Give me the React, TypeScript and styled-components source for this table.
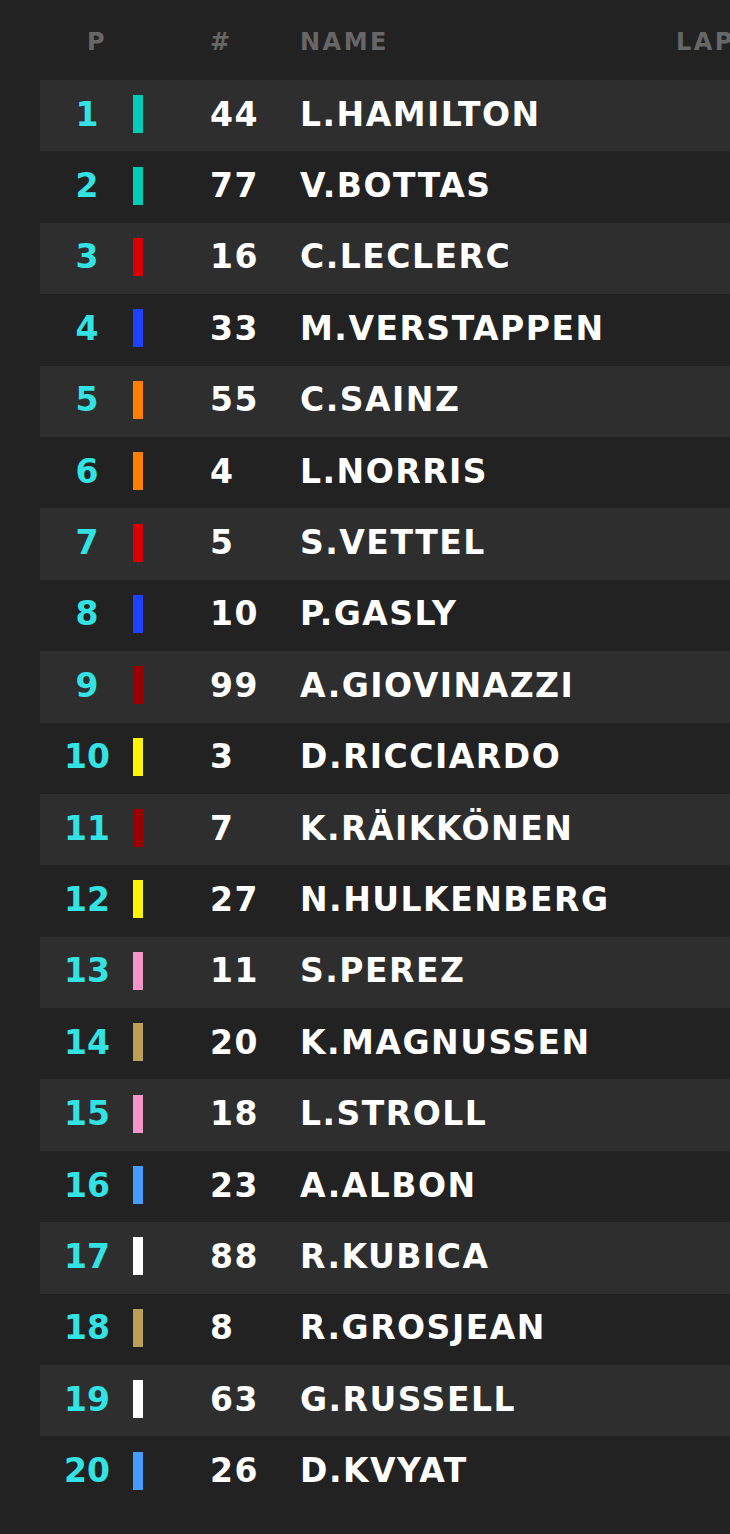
import styled, { createGlobalStyle } from "styled-components";

const GlobalStyle = createGlobalStyle`
  html, body {
    margin: 0;
    padding: 0;
    background: #222222;
    overflow: hidden;
  }
  body {
    font-family: "DejaVu Sans", "Liberation Sans", sans-serif;
  }
`;

interface Driver {
  pos: number;
  num: number;
  name: string;
  team: string;
}

const teamColors: Record<string, string> = {
  mercedes: "#00cdb8",
  ferrari: "#d80000",
  redbull: "#1e41ff",
  mclaren: "#ff8000",
  alfa: "#9b0000",
  renault: "#fff500",
  racingpoint: "#f596c8",
  haas: "#bd9e57",
  tororosso: "#469bff",
  williams: "#ffffff",
};

const drivers: Driver[] = [
  { pos: 1, num: 44, name: "L.HAMILTON", team: "mercedes" },
  { pos: 2, num: 77, name: "V.BOTTAS", team: "mercedes" },
  { pos: 3, num: 16, name: "C.LECLERC", team: "ferrari" },
  { pos: 4, num: 33, name: "M.VERSTAPPEN", team: "redbull" },
  { pos: 5, num: 55, name: "C.SAINZ", team: "mclaren" },
  { pos: 6, num: 4, name: "L.NORRIS", team: "mclaren" },
  { pos: 7, num: 5, name: "S.VETTEL", team: "ferrari" },
  { pos: 8, num: 10, name: "P.GASLY", team: "redbull" },
  { pos: 9, num: 99, name: "A.GIOVINAZZI", team: "alfa" },
  { pos: 10, num: 3, name: "D.RICCIARDO", team: "renault" },
  { pos: 11, num: 7, name: "K.RÄIKKÖNEN", team: "alfa" },
  { pos: 12, num: 27, name: "N.HULKENBERG", team: "renault" },
  { pos: 13, num: 11, name: "S.PEREZ", team: "racingpoint" },
  { pos: 14, num: 20, name: "K.MAGNUSSEN", team: "haas" },
  { pos: 15, num: 18, name: "L.STROLL", team: "racingpoint" },
  { pos: 16, num: 23, name: "A.ALBON", team: "tororosso" },
  { pos: 17, num: 88, name: "R.KUBICA", team: "williams" },
  { pos: 18, num: 8, name: "R.GROSJEAN", team: "haas" },
  { pos: 19, num: 63, name: "G.RUSSELL", team: "williams" },
  { pos: 20, num: 26, name: "D.KVYAT", team: "tororosso" },
];

const App = () => {
  return (
    <>
      <GlobalStyle />
      <Board>
        <HeaderRow>
          <HeadPos>P</HeadPos>
          <HeadCell>#</HeadCell>
          <HeadCell>NAME</HeadCell>
          <HeadCell>LAP</HeadCell>
        </HeaderRow>
        {drivers.map(d => (
          <Row key={d.pos} striped={d.pos % 2 === 1}>
            <Pos>{d.pos}</Pos>
            <TeamBar color={teamColors[d.team]} />
            <CarNumber>{d.num}</CarNumber>
            <Name>{d.name}</Name>
          </Row>
        ))}
      </Board>
    </>
  );
};

export default App;

// the board is wider than the window: the LAP column runs off the right edge
const Board = styled.div`
  width: 900px;
  padding-left: 40px;
  background: #222222;
  min-height: 1534px;
  box-sizing: border-box;
`;

const HeaderRow = styled.div`
  display: grid;
  grid-template-columns: 90px 68px 90px 376px 1fr;
  align-items: center;
  height: 80px;
  padding-left: 12px;
  padding-top: 4px;
  box-sizing: border-box;
  & > :nth-child(2) {
    grid-column: 3;
  }
`;

const HeadCell = styled.span`
  color: #676767;
  font-size: 24px;
  font-weight: 600;
  letter-spacing: 2.5px;
  white-space: nowrap;
`;

const HeadPos = styled(HeadCell)`
  text-align: center;
`;

const Row = styled.div<{ striped: boolean }>`
  display: grid;
  grid-template-columns: 70px 88px 90px 1fr;
  align-items: center;
  height: 71.4px;
  padding-left: 12px;
  padding-bottom: 3px;
  box-sizing: border-box;
  background-color: ${p => (p.striped ? "#2e2e2e" : "#222222")};
`;

const Pos = styled.span`
  text-align: center;
  color: #33e3e3;
  font-size: 33px;
  font-weight: 700;
`;

const TeamBar = styled.span<{ color: string }>`
  display: block;
  width: 10px;
  height: 38px;
  margin-left: 11px;
  background-color: ${p => p.color};
`;

const CarNumber = styled.span`
  color: #ffffff;
  font-size: 33px;
  font-weight: 700;
  letter-spacing: 1.5px;
`;

const Name = styled.span`
  color: #ffffff;
  font-size: 33px;
  font-weight: 700;
  letter-spacing: 1.5px;
  white-space: nowrap;
`;
